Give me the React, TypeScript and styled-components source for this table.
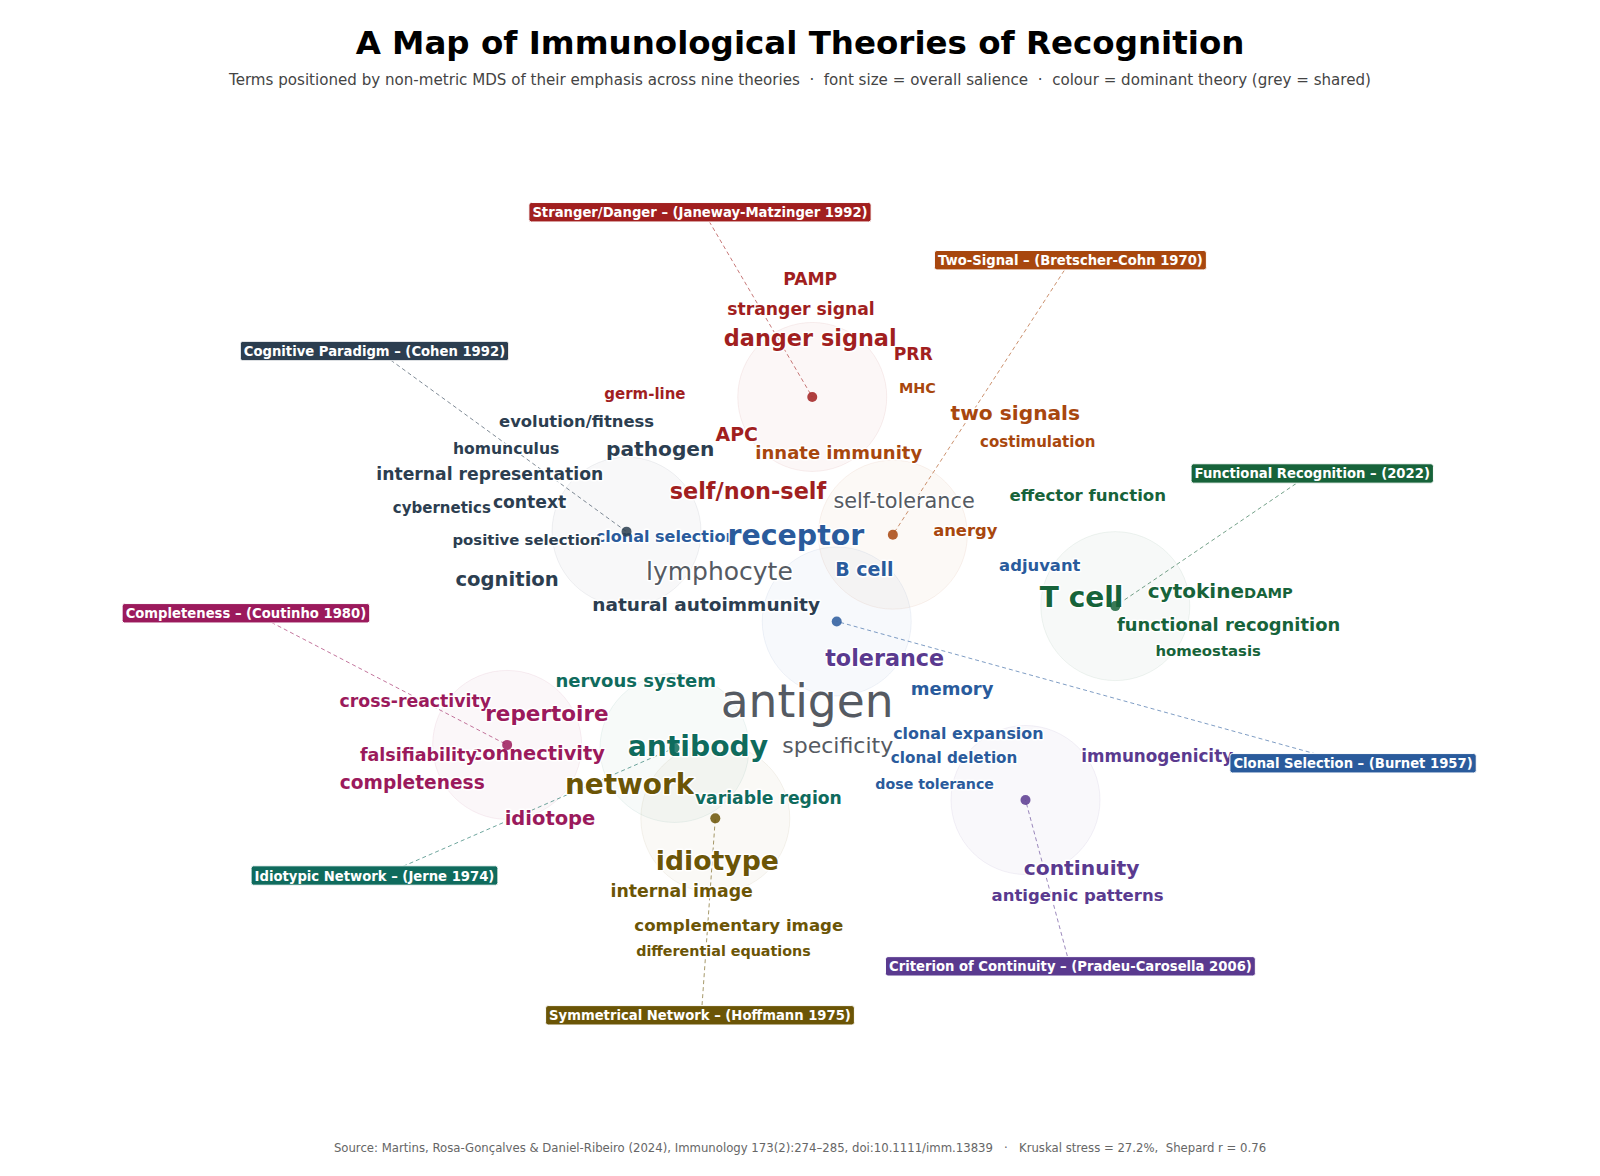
import React from "react";
import styled, { createGlobalStyle } from "styled-components";

// positions were read off a 1568-wide copy of the figure; S brings them to page pixels
const S = 1600 / 1568;

type Theory = {
  key: string;
  label: string;
  color: string;
  dot: [number, number];
  box: [number, number]; // label centre
  from: [number, number]; // where the leader starts
};

type Term = {
  text: string;
  x: number;
  y: number;
  size: number;
  color: string;
  bold?: boolean;
};

const C = {
  cognitive: "#2c3e50",
  danger: "#a11f1f",
  two: "#a8470e",
  functional: "#17633a",
  clonal: "#2a5b9c",
  completeness: "#9b1a5c",
  idiotypic: "#0f6b5d",
  symmetrical: "#6b5506",
  continuity: "#5a3a8f",
  shared: "#555a62",
};

const theories: Theory[] = [
  { key: "danger", label: "Stranger/Danger – (Janeway-Matzinger 1992)", color: C.danger, dot: [796, 389], box: [686, 208], from: [695, 217] },
  { key: "two", label: "Two-Signal – (Bretscher-Cohn 1970)", color: C.two, dot: [875, 524], box: [1049, 255], from: [1043, 265] },
  { key: "cognitive", label: "Cognitive Paradigm – (Cohen 1992)", color: C.cognitive, dot: [614, 521], box: [367, 344], from: [383, 353] },
  { key: "functional", label: "Functional Recognition – (2022)", color: C.functional, dot: [1093, 594], box: [1286, 464], from: [1270, 474] },
  { key: "completeness", label: "Completeness – (Coutinho 1980)", color: C.completeness, dot: [497, 730], box: [241, 601], from: [266, 610] },
  { key: "clonal", label: "Clonal Selection – (Burnet 1957)", color: C.clonal, dot: [820, 609], box: [1326, 748], from: [1290, 739] },
  { key: "idiotypic", label: "Idiotypic Network – (Jerne 1974)", color: C.idiotypic, dot: [661, 733], box: [367, 858], from: [395, 849] },
  { key: "continuity", label: "Criterion of Continuity – (Pradeu-Carosella 2006)", color: C.continuity, dot: [1005, 784], box: [1049, 947], from: [1046, 937] },
  { key: "symmetrical", label: "Symmetrical Network – (Hoffmann 1975)", color: C.symmetrical, dot: [701, 802], box: [686, 995], from: [688, 985] },
];

const terms: Term[] = [
  // stranger / danger
  { text: "PAMP", x: 794, y: 273, size: 17.2, color: C.danger, bold: true },
  { text: "stranger signal", x: 785, y: 303, size: 17.2, color: C.danger, bold: true },
  { text: "danger signal", x: 794, y: 331, size: 22.4, color: C.danger, bold: true },
  { text: "PRR", x: 895, y: 347, size: 17.2, color: C.danger, bold: true },
  { text: "germ-line", x: 632, y: 386, size: 15, color: C.danger, bold: true },
  { text: "APC", x: 722, y: 425, size: 18.9, color: C.danger, bold: true },
  // two-signal
  { text: "MHC", x: 899, y: 380, size: 14.4, color: C.two, bold: true },
  { text: "two signals", x: 995, y: 405, size: 20.2, color: C.two, bold: true },
  { text: "costimulation", x: 1017, y: 433, size: 15, color: C.two, bold: true },
  { text: "innate immunity", x: 822, y: 443, size: 18, color: C.two, bold: true },
  { text: "anergy", x: 946, y: 520, size: 16.4, color: C.two, bold: true },
  // clonal selection sits under the cognitive terms
  { text: "clonal selection", x: 653, y: 526, size: 16, color: C.clonal, bold: true },
  // cognitive
  { text: "evolution/fitness", x: 565, y: 413, size: 16.4, color: C.cognitive, bold: true },
  { text: "homunculus", x: 496, y: 440, size: 15.6, color: C.cognitive, bold: true },
  { text: "pathogen", x: 647, y: 440, size: 20.2, color: C.cognitive, bold: true },
  { text: "internal representation", x: 480, y: 465, size: 17.2, color: C.cognitive, bold: true },
  { text: "context", x: 519, y: 492, size: 17.2, color: C.cognitive, bold: true },
  { text: "cybernetics", x: 433, y: 498, size: 15, color: C.cognitive, bold: true },
  { text: "positive selection", x: 516, y: 529, size: 14.9, color: C.cognitive, bold: true },
  { text: "cognition", x: 497, y: 568, size: 19.6, color: C.cognitive, bold: true },
  { text: "self/non-self", x: 733, y: 481, size: 22.4, color: C.danger, bold: true },
  { text: "self-tolerance", x: 886, y: 491, size: 20.8, color: C.shared },
  { text: "receptor", x: 780, y: 525, size: 28.4, color: C.clonal, bold: true },
  { text: "lymphocyte", x: 705, y: 560, size: 25, color: C.shared },
  { text: "B cell", x: 847, y: 558, size: 19, color: C.clonal, bold: true },
  { text: "natural autoimmunity", x: 692, y: 592, size: 18.5, color: C.cognitive, bold: true },
  { text: "adjuvant", x: 1019, y: 554, size: 16.4, color: C.clonal, bold: true },
  { text: "memory", x: 933, y: 675, size: 18, color: C.clonal, bold: true },
  { text: "clonal expansion", x: 949, y: 719, size: 15.9, color: C.clonal, bold: true },
  { text: "clonal deletion", x: 935, y: 743, size: 15.2, color: C.clonal, bold: true },
  { text: "dose tolerance", x: 916, y: 768, size: 14.2, color: C.clonal, bold: true },
  // functional recognition
  { text: "effector function", x: 1066, y: 486, size: 16.6, color: C.functional, bold: true },
  { text: "T cell", x: 1060, y: 586, size: 28, color: C.functional, bold: true },
  { text: "cytokine", x: 1172, y: 579, size: 20, color: C.functional, bold: true },
  { text: "DAMP", x: 1243, y: 581, size: 14.6, color: C.functional, bold: true },
  { text: "functional recognition", x: 1204, y: 612, size: 17.9, color: C.functional, bold: true },
  { text: "homeostasis", x: 1184, y: 638, size: 14.9, color: C.functional, bold: true },
  // continuity
  { text: "tolerance", x: 867, y: 645, size: 22.3, color: C.continuity, bold: true },
  { text: "immunogenicity", x: 1134, y: 741, size: 16.8, color: C.continuity, bold: true },
  { text: "continuity", x: 1060, y: 851, size: 20.3, color: C.continuity, bold: true },
  { text: "antigenic patterns", x: 1056, y: 878, size: 16.5, color: C.continuity, bold: true },
  // completeness / idiotypic / symmetrical
  { text: "nervous system", x: 623, y: 667, size: 18, color: C.idiotypic, bold: true },
  { text: "cross-reactivity", x: 407, y: 687, size: 17.3, color: C.completeness, bold: true },
  { text: "repertoire", x: 536, y: 699, size: 21.5, color: C.completeness, bold: true },
  { text: "antigen", x: 791, y: 687, size: 45.5, color: C.shared },
  { text: "connectivity", x: 527, y: 738, size: 19.4, color: C.completeness, bold: true },
  { text: "falsifiability", x: 410, y: 740, size: 17.5, color: C.completeness, bold: true },
  { text: "antibody", x: 684, y: 732, size: 28.2, color: C.idiotypic, bold: true },
  { text: "specificity", x: 821, y: 731, size: 22, color: C.shared },
  { text: "completeness", x: 404, y: 767, size: 18.6, color: C.completeness, bold: true },
  { text: "network", x: 617, y: 769, size: 27.9, color: C.symmetrical, bold: true },
  { text: "variable region", x: 753, y: 782, size: 17.2, color: C.idiotypic, bold: true },
  { text: "idiotope", x: 539, y: 802, size: 19.5, color: C.completeness, bold: true },
  { text: "idiotype", x: 703, y: 843, size: 26.7, color: C.symmetrical, bold: true },
  { text: "internal image", x: 668, y: 873, size: 17.3, color: C.symmetrical, bold: true },
  { text: "complementary image", x: 724, y: 907, size: 16.6, color: C.symmetrical, bold: true },
  { text: "differential equations", x: 709, y: 932, size: 14.3, color: C.symmetrical, bold: true },
];

const LABEL_FONT = 13.2;

let measureCtx: CanvasRenderingContext2D | null = null;
const measure = (text: string): number => {
  if (!measureCtx) {
    measureCtx = document.createElement("canvas").getContext("2d");
  }
  if (!measureCtx) return text.length * 8.4;
  measureCtx.font = `bold ${LABEL_FONT}px "DejaVu Sans"`;
  return measureCtx.measureText(text).width;
};

const GlobalStyle = createGlobalStyle`
  html, body {
    margin: 0;
    padding: 0;
    background: #ffffff;
  }
  body {
    font-family: "DejaVu Sans", "Liberation Sans", sans-serif;
  }
`;

const Page = styled.div`
  width: 1600px;
  height: 1176px;
  display: flex;
  flex-direction: column;
  padding-top: 23px;
  box-sizing: border-box;
  overflow: hidden;
`;

const Header = styled.header`
  display: flex;
  flex-direction: column;
  align-items: center;
  gap: 8px;
`;

const Title = styled.h1`
  margin: 0;
  font-family: "DejaVu Sans", sans-serif;
  font-size: 32.5px;
  line-height: 40px;
  font-weight: 700;
  color: #000;
`;

const Subtitle = styled.p`
  margin: 0;
  font-family: "DejaVu Sans", sans-serif;
  font-size: 15.1px;
  line-height: 18px;
  color: #444;
  white-space: pre;
`;

const Chart = styled.svg`
  display: block;
  margin-top: 11px;
  width: 1600px;
  height: 1000px;
  font-family: "DejaVu Sans", sans-serif;
`;

const Footer = styled.footer`
  margin-top: 41px;
  text-align: center;
  font-family: "DejaVu Sans", sans-serif;
  font-size: 11.7px;
  line-height: 14px;
  color: #666;
  white-space: pre;
`;

function Halo({ t }: { t: Theory }) {
  return (
    <circle
      cx={t.dot[0] * S}
      cy={t.dot[1] * S}
      r={73 * S}
      fill={t.color}
      fillOpacity={0.035}
      stroke={t.color}
      strokeOpacity={0.07}
      strokeWidth={1}
    />
  );
}

function Leader({ t }: { t: Theory }) {
  return (
    <line
      x1={t.from[0] * S}
      y1={t.from[1] * S}
      x2={t.dot[0] * S}
      y2={t.dot[1] * S}
      stroke={t.color}
      strokeOpacity={0.6}
      strokeWidth={1}
      strokeDasharray="4 3"
    />
  );
}

function Word({ w }: { w: Term }) {
  return (
    <text
      x={w.x * S}
      y={w.y * S}
      textAnchor="middle"
      dominantBaseline="central"
      fontSize={w.size}
      fontWeight={w.bold ? 700 : 400}
      fill={w.color}
      stroke="#fff"
      strokeWidth={3}
      strokeLinejoin="round"
      paintOrder="stroke"
    >
      {w.text}
    </text>
  );
}

function Label({ t }: { t: Theory }) {
  const width = measure(t.label) + 7;
  const cx = t.box[0] * S;
  const cy = t.box[1] * S;
  return (
    <g>
      <rect
        x={cx - width / 2}
        y={cy - 9.7}
        width={width}
        height={19.4}
        rx={2.5}
        fill={t.color}
        stroke="#fff"
        strokeWidth={1}
      />
      <text
        x={cx}
        y={cy + 0.5}
        textAnchor="middle"
        dominantBaseline="central"
        fontSize={LABEL_FONT}
        fontWeight={700}
        fill="#fff"
      >
        {t.label}
      </text>
    </g>
  );
}

export default function App(): JSX.Element {
  return (
    <>
      <GlobalStyle />
      <Page>
        <Header>
          <Title>A Map of Immunological Theories of Recognition</Title>
          <Subtitle>
            {"Terms positioned by non-metric MDS of their emphasis across nine theories  ·  font size = overall salience  ·  colour = dominant theory (grey = shared)"}
          </Subtitle>
        </Header>

        {/* the map: halos, leaders, terms, centroids, theory labels (page coords, y from 100) */}
        <Chart viewBox="0 100 1600 1000">
          {theories.map((t) => (
            <Halo key={t.key} t={t} />
          ))}
          {theories.map((t) => (
            <Leader key={t.key} t={t} />
          ))}
          {terms.map((w) => (
            <Word key={w.text} w={w} />
          ))}
          {theories.map((t) => (
            <circle key={t.key} cx={t.dot[0] * S} cy={t.dot[1] * S} r={5} fill={t.color} fillOpacity={0.85} />
          ))}
          {theories.map((t) => (
            <Label key={t.key} t={t} />
          ))}
        </Chart>

        <Footer>
          {"Source: Martins, Rosa-Gonçalves & Daniel-Ribeiro (2024), Immunology 173(2):274–285, doi:10.1111/imm.13839   ·   Kruskal stress = 27.2%,  Shepard r = 0.76"}
        </Footer>
      </Page>
    </>
  );
}
